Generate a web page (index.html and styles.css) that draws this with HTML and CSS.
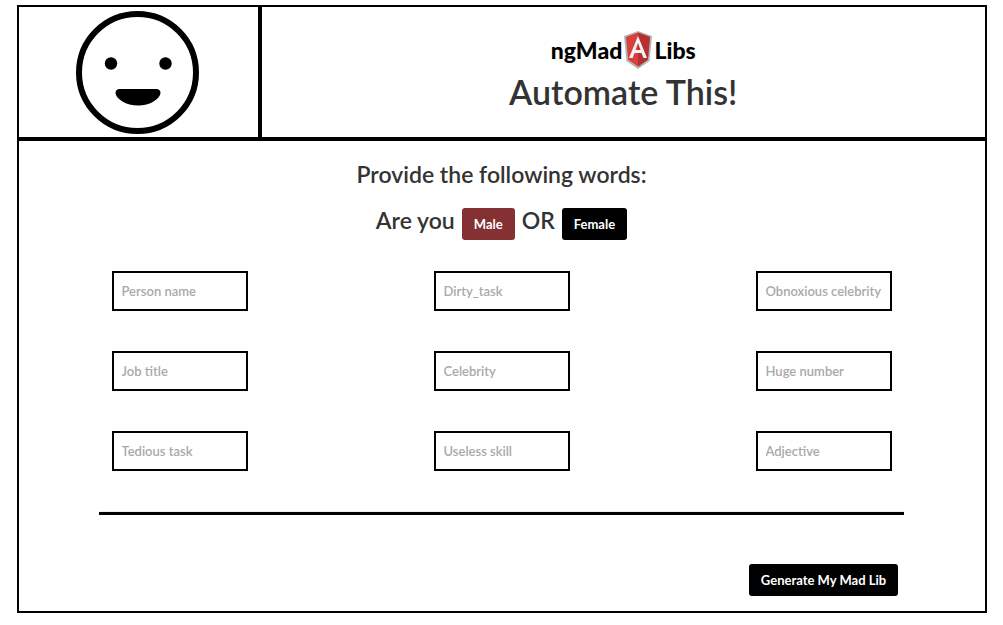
FILE: index.html
```html
<!DOCTYPE html>
<html lang="en">
<head>
<meta charset="utf-8">
<meta name="viewport" content="width=device-width, initial-scale=1">
<title>ngMadLibs</title>
<link rel="stylesheet" href="styles.css">
</head>
<body>
<main class="frame">
  <header class="header">
    <div class="face-cell">
      <svg class="face" viewBox="0 0 124 124" role="img" aria-label="Smiling face">
        <circle cx="61.500" cy="62.5" r="58.5" fill="none" stroke="#000" stroke-width="6"/>
        <circle cx="35" cy="53.5" r="6.2"/>
        <circle cx="89.500" cy="53.500" r="6.200"/>
        <path d="M43 79H81Q84.500 79.500 84.500 83C84 89 74 95.500 62 95.500S40 89 39.500 83Q39.500 79.500 43 79Z"/>
      </svg>
    </div>
    <div class="title-cell">
      <div class="logo">
        <span>ngMad</span>
        <svg class="shield" viewBox="0 0 28 38" aria-hidden="true">
          <path d="M14 0L28 5L25.500 30L14 38L2.500 30L0 5Z" fill="#b3b3b3"/>
          <path d="M14 1.500L26 6L23.800 28.800L14 35.500L4.200 28.800L2 6Z" fill="#d6403f"/>
          <path d="M14 1.500L26 6L23.800 28.800L14 35.500Z" fill="#b63032"/>
          <path d="M14 5L5 27H8.600L10.500 22H17.500L19.500 27H23ZM14 12L16.500 19H11.500Z" fill="#f2f2f2" fill-rule="evenodd"/>
        </svg>
        <span>Libs</span>
      </div>
      <h1 class="title">Automate This!</h1>
    </div>
  </header>
  <form class="form">
    <h2 class="heading">Provide the following words:</h2>
    <div class="heading gender">
      <span>Are you</span>
      <button type="button" class="btn btn-red">Male</button>
      <span>OR</span>
      <button type="button" class="btn">Female</button>
    </div>
    <div class="grid">
      <input class="word" type="text" aria-label="Person name" placeholder="Person name">
      <input class="word" type="text" aria-label="Dirty task" placeholder="Dirty_task">
      <input class="word" type="text" aria-label="Obnoxious celebrity" placeholder="Obnoxious celebrity">
      <input class="word" type="text" aria-label="Job title" placeholder="Job title">
      <input class="word" type="text" aria-label="Celebrity" placeholder="Celebrity">
      <input class="word" type="text" aria-label="Huge number" placeholder="Huge number">
      <input class="word" type="text" aria-label="Tedious task" placeholder="Tedious task">
      <input class="word" type="text" aria-label="Useless skill" placeholder="Useless skill">
      <input class="word" type="text" aria-label="Adjective" placeholder="Adjective">
    </div>
    <hr class="rule">
    <div class="grid">
      <button type="submit" class="btn submit">Generate My Mad Lib</button>
    </div>
  </form>
</main>
</body>
</html>
```
FILE: styles.css
```css
* {
  box-sizing: border-box;
}

body {
  margin: 0;
  padding: 5px 16px 12px;
  background: #fff;
  color: #333;
  font-family: Lato, "Open Sans", sans-serif;
  font-weight: 600;
}

.frame {
  max-width: 970px;
  margin: 0 auto;
  border: 2px solid #000;
}

.header {
  display: grid;
  grid-template-columns: 1fr 3fr;
  border-bottom: 4px solid #000;
}

.face-cell {
  display: flex;
  justify-content: center;
  padding: 3px 0;
  border-right: 2px solid #000;
}

.face {
  width: 124px;
  height: 124px;
}

.title-cell {
  display: flex;
  flex-direction: column;
  align-items: center;
  padding-top: 24px;
  border-left: 2px solid #000;
}

.logo {
  display: flex;
  align-items: center;
  gap: 2px;
  height: 38px;
  color: #000;
  font: 900 23px/32px Lato, sans-serif;
}

.shield {
  width: 28px;
  height: 38px;
}

.title {
  margin: 0;
  font-size: 34px;
  line-height: 46px;
  font-weight: 600;
}

.form {
  padding: 20px 0 15px;
}

.heading {
  margin: 0;
  font-size: 23px;
  line-height: 26px;
  font-weight: 600;
  text-align: center;
}

.gender {
  display: flex;
  justify-content: center;
  align-items: baseline;
  gap: 7px;
  margin: 20px 0 31px;
}

.btn {
  height: 32px;
  padding: 0 12px;
  border: 0;
  border-radius: 3px;
  background: #000;
  color: #fff;
  font: inherit;
  font-size: 13px;
  font-weight: 700;
  line-height: 20px;
}

.btn-red {
  background: #853033;
}

.grid {
  display: grid;
  grid-template-columns: repeat(3, 1fr);
  justify-items: center;
  row-gap: 40px;
}

.word {
  width: 136px;
  height: 40px;
  padding: 0 8px;
  border: 2px solid #000;
  background: #fff;
  color: #333;
  font: inherit;
  font-size: 13px;
}

.word::placeholder {
  color: #a9a9a9;
}

.rule {
  width: calc(100% * 5 / 6);
  height: 4px;
  margin: 40px auto 49px;
  border: 0;
  border-top: 1px solid #eee;
  background: #000;
}

.submit {
  grid-column: 3;
}
```
